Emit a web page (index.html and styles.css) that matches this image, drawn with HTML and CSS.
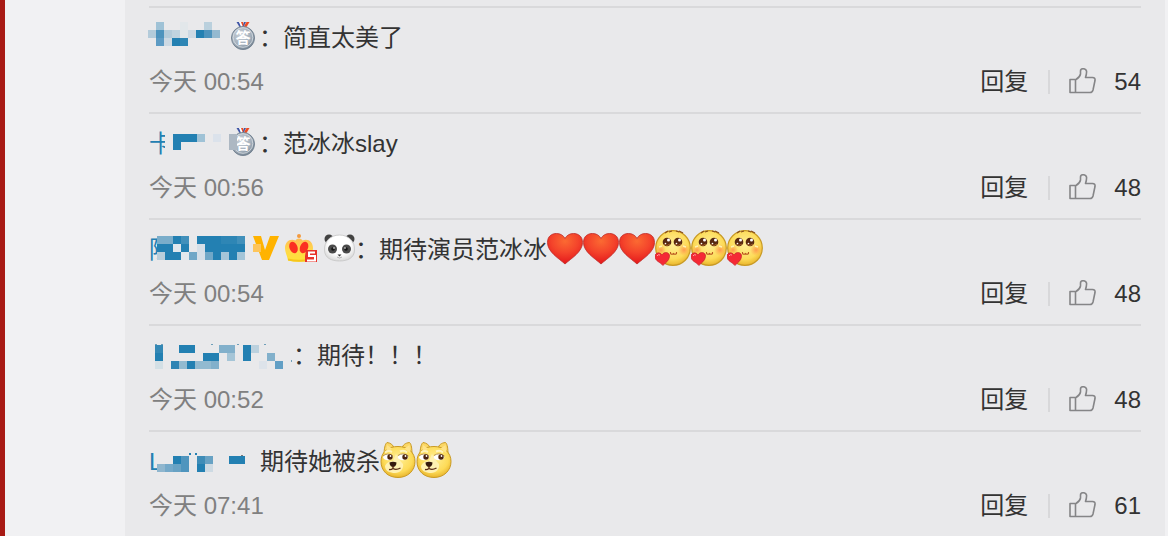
FILE: index.html
```html
<!DOCTYPE html>
<html lang="zh-CN">
<head>
    <meta charset="UTF-8">
    <meta name="viewport" content="width=device-width, initial-scale=1.0">
    <title>评论</title>
    <link rel="stylesheet" href="styles.css">
</head>
<body>
    <!-- ICONS -->
    <svg class="defs" width="0" height="0" aria-hidden="true">
        <defs>
            <radialGradient id="silver" cx="40%" cy="35%" r="70%">
                <stop offset="0" stop-color="#c9d0d8"/>
                <stop offset=".65" stop-color="#a3afbb"/>
                <stop offset="1" stop-color="#71808f"/>
            </radialGradient>
            <radialGradient id="red" cx="50%" cy="25%" r="75%">
                <stop offset="0" stop-color="#fb6a32"/>
                <stop offset=".5" stop-color="#f4442b"/>
                <stop offset="1" stop-color="#e3161b"/>
            </radialGradient>
            <linearGradient id="gold" x1="0" y1="0" x2="0" y2="1">
                <stop offset="0" stop-color="#ffbd55"/>
                <stop offset=".5" stop-color="#ffd84a"/>
                <stop offset="1" stop-color="#ffe234"/>
            </linearGradient>
            <radialGradient id="face" cx="50%" cy="40%" r="60%">
                <stop offset="0" stop-color="#ffef96"/>
                <stop offset=".7" stop-color="#fddb58"/>
                <stop offset="1" stop-color="#e9b52c"/>
            </radialGradient>
            <radialGradient id="blush">
                <stop offset="0" stop-color="#ff8a4a" stop-opacity=".8"/>
                <stop offset="1" stop-color="#ff9a50" stop-opacity="0"/>
            </radialGradient>
            <radialGradient id="fur" cx="50%" cy="40%" r="60%">
                <stop offset=".6" stop-color="#fff"/>
                <stop offset="1" stop-color="#dadada"/>
            </radialGradient>
        </defs>
        <symbol id="medal" viewBox="0 0 24 28">
            <path d="M5.500 0h3l3 5h-3z" fill="#3f55a5"/>
            <path d="M8 0h2l2 5h-2z" fill="#fff"/>
            <path d="M10 0h2l1 3-1 2z" fill="#ee4b22"/>
            <path d="M18.500 0h-3l-3 5h3z" fill="#ee4b22"/>
            <path d="M15 0h-2l-1 4h1z" fill="#3f55a5"/>
            <circle cx="12" cy="16" r="11.500" fill="url(#silver)" stroke="#748392"/>
            <circle cx="12" cy="15.500" r="9.800" fill="none" stroke="#dbe1e6" stroke-width=".8"/>
        </symbol>
        <symbol id="vip" viewBox="0 0 26 24">
            <path d="M0 0h8l4 14L17 0h9L16 24H9z" fill="#ffb300"/>
            <path d="M0 8h8v8H0z" fill="#fdc55b"/>
        </symbol>
        <symbol id="crown" viewBox="0 0 32 28">
            <circle cx="14" cy="2" r="2" fill="#f39a3f"/>
            <path d="M14 4.500c2 0 3 1 3.500 2C23 4 28 8 28 14c0 4-2 7-3 12.500q-11 2.500-22 0C2 21 0 18 0 14 0 8 5 4 10.500 6.500c.5-1 1.500-2 3.500-2z" fill="url(#gold)"/>
            <path d="M3 24.500q11 2.500 22 0v2q-11 2.500-22 0z" fill="#f6c51c"/>
            <ellipse cx="8.500" cy="13.500" rx="4" ry="6" transform="rotate(-22 8.500 13.500)" fill="#fb3022"/>
            <ellipse cx="19" cy="13.500" rx="4" ry="6" transform="rotate(22 19 13.500)" fill="#fb3022"/>
            <path d="M21 16h11v12H20v-6z" fill="#e8332b"/>
            <path d="M30 18.500h-6V22h6v4.500h-8" fill="none" stroke="#fff" stroke-width="2"/>
        </symbol>
        <symbol id="panda" viewBox="0 0 31 28">
            <circle cx="5" cy="5" r="4.500" fill="#424242"/>
            <circle cx="26" cy="5" r="4.500" fill="#424242"/>
            <path d="M15.500 1C25 1 31 8 30.500 16c0 8-7 11-15 11s-15-3-15-11C0 8 6 1 15.500 1z" fill="url(#fur)" stroke="#c5c5c5" stroke-width=".8"/>
            <ellipse cx="8.500" cy="15" rx="4.500" ry="4.500" fill="#4a4a4a"/>
            <ellipse cx="22.500" cy="15" rx="4.500" ry="4.500" fill="#4a4a4a"/>
            <circle cx="9" cy="15" r="1.800" fill="#161616"/>
            <circle cx="22" cy="15" r="1.800" fill="#161616"/>
            <circle cx="10" cy="14" r=".8" fill="#fff"/>
            <circle cx="21" cy="14" r=".8" fill="#fff"/>
            <path d="M13.500 20.500h4l-2 2z" fill="#333"/>
            <path d="M13 23q2.500 2 5 0" fill="none" stroke="#999" stroke-width=".7"/>
        </symbol>
        <symbol id="heart" viewBox="0 0 36 36">
            <path d="M18 34C12 28.500.5 22 .5 12.500.5 6 5 3.500 9.500 3.500c4 0 7 2 8.500 5 1.500-3 4.500-5 8.500-5 4.500 0 9 2.500 9 9C35.500 22 24 28.500 18 34z" fill="url(#red)" stroke="#bc2b27" stroke-width=".8"/>
        </symbol>
        <symbol id="love" viewBox="0 0 36 36">
            <circle cx="18" cy="18" r="17.300" fill="url(#face)" stroke="#c99a24" stroke-width="1.200"/>
            <path d="M10 3l3-2M14 2l3-1M21 1l3 1M24 1l4 2" stroke="#89501d" stroke-width="1.300" fill="none"/>
            <circle cx="6" cy="20" r="5" fill="url(#blush)"/>
            <circle cx="29" cy="20" r="6" fill="url(#blush)"/>
            <path d="M4 17l3-1M28 16l3 1" stroke="#fff2b0" stroke-width="1.500"/>
            <circle cx="12" cy="12" r="4.300" fill="#582911"/>
            <circle cx="23" cy="12" r="4.300" fill="#582911"/>
            <path d="M9 14q3 3 6 0M20 14q3 3 6 0" stroke="#a76128" fill="none"/>
            <circle cx="13.500" cy="10" r="1.500" fill="#fff"/>
            <circle cx="24.500" cy="10" r="1.500" fill="#fff"/>
            <circle cx="10.500" cy="13.500" r=".8" fill="#fff"/>
            <circle cx="21.500" cy="13.500" r=".8" fill="#fff"/>
            <path d="M15.500 22v1.500q1.500 1.500 3 0 1.500 1.500 3 0V22" fill="none" stroke="#bb5b22" stroke-width="1.100"/>
            <path d="M8 35.500C5 32 0 31 0 26.500c0-4 5-5 7-1.500 2-4 8-3 7.500 1.500C14 31 11 32 8 35.500z" fill="#f52935" stroke="#c3252b" stroke-width=".7"/>
            <path d="M2 26q1-2 3-1" fill="none" stroke="#ffa2a0"/>
        </symbol>
        <symbol id="doge" viewBox="0 0 36 36">
            <path d="M4 13C4 7 5 2 7 .5c4 .5 6 2.500 7 5.500h8c1-3 3-5 7.500-5.500C31.500 2 32 7 32 13z" fill="#fbd765" stroke="#c99a24"/>
            <path d="M18 4.500c10 0 17 6 17 15s-7 16-17 16S1 29 1 19.500s7-15 17-15z" fill="url(#face)" stroke="#c99a24"/>
            <path d="M7 3l5 3.500-6 5zM29.500 3l-5 3.500 6 5z" fill="#fee389"/>
            <path d="M5 24c2-4 5-5 8-5l3-7c2 4 4 7 7 10 1 5-3 9-8 9S5 29 5 24z" fill="#fff1b2"/>
            <path d="M5 10.500q3-2.500 7-.5M20 9.500q4-2 7 1" fill="none" stroke="#fff4bd" stroke-width="2"/>
            <ellipse cx="8" cy="15" rx="5" ry="3.300" fill="#fff"/>
            <ellipse cx="23" cy="15" rx="5.300" ry="3.300" fill="#fff"/>
            <path d="M3 14q4-3.500 9.500-.5M18 13.500q5-3.500 10.500.5" fill="none" stroke="#a3762c" stroke-width=".8"/>
            <circle cx="10" cy="15" r="2.700" fill="#4c230e"/>
            <circle cx="25" cy="15" r="2.700" fill="#4c230e"/>
            <circle cx="10.500" cy="14" r=".9" fill="#fff"/>
            <circle cx="25.500" cy="14" r=".9" fill="#fff"/>
            <path d="M9.500 20.500c2-1 5-1 7 0 0 3-2 4.500-3.500 4.500s-3.500-1.500-3.500-4.500z" fill="#351a0e"/>
            <path d="M13 24v3M9 27.500q2 .5 4-1 3 2 7.500-.5" fill="none" stroke="#5b2d16" stroke-width="1.400"/>
        </symbol>
        <symbol id="thumb" viewBox="0 0 28 28">
            <path d="M2 11.500h6c2.500-1.500 4-3 4.500-5.500V3c0-3 5.500-3 6 0 .3 2-.2 4-1 6.500h7c2 0 2.800 1 2.500 3L25 22c-.5 2-1.200 2.500-3 2.500H2zM7.500 11.500v13" fill="none" stroke="#858587" stroke-width="1.600" stroke-linejoin="round"/>
        </symbol>
    </svg>

    <div class="page">
        <ul class="comments">
            <li class="comment">
                <div class="content">
                    <a href="#" class="name" aria-label="用户">
                        <svg class="mosaic" width="82" height="36">
                            <path d="M7 4h8v8H7z" fill="#9fc2d6"/>
                            <path d="M31 4h8v16h-8z" fill="#e2e7ea"/>
                            <path d="M55 4h8v8h-8z" fill="#bad0dd"/>
                            <path d="M-1 12h8v8h-8zM15 12h8v8h-8z" fill="#b3cbda"/>
                            <path d="M7 12h8v8H7zM55 12h8v8h-8z" fill="#4d93bd"/>
                            <path d="M23 12h8v8h-8z" fill="#c0d3df"/>
                            <path d="M39 12h8v8h-8zM15 20h8v8h-8z" fill="#cdd9e3"/>
                            <path d="M47 12h8v8h-8zM23 20h8v8h-8z" fill="#2380b2"/>
                            <path d="M63 12h8v8h-8z" fill="#94b9d0"/>
                            <path d="M7 20h8v8H7z" fill="#5d9bc4"/>
                            <path d="M31 20h8v8h-8z" fill="#2e86b5"/>
                        </svg>
                    </a>
                    <span class="medal"><svg><use href="#medal"/></svg><b>答</b></span>
                    <span class="text">：简直太美了</span>
                </div>
                <div class="meta">
                    <time>今天 00:54</time>
                    <div class="actions">
                        <button type="button" class="reply">回复</button>
                        <button type="button" class="like"><svg class="thumb"><use href="#thumb"/></svg>54</button>
                    </div>
                </div>
            </li>

            <li class="comment">
                <div class="content">
                    <a href="#" class="name"><span class="initial wide">卡</span>
                        <svg class="mosaic" width="66" height="36">
                            <path d="M0 0h10v36H0z" fill="#e9e9eb"/>
                            <path d="M8 10h24v8H16v8H8z" fill="#2380b2"/>
                            <path d="M32 10h8v8h-8z" fill="#9fc2d6"/>
                            <path d="M48 10h8v8h-8z" fill="#dbe2eb"/>
                            <path d="M64 10h8v16h-8z" fill="#adb8c3"/>
                        </svg>
                    </a>
                    <span class="medal"><svg><use href="#medal"/></svg><b>答</b></span>
                    <span class="text">：范冰冰slay</span>
                </div>
                <div class="meta">
                    <time>今天 00:56</time>
                    <div class="actions">
                        <button type="button" class="reply">回复</button>
                        <button type="button" class="like"><svg class="thumb"><use href="#thumb"/></svg>48</button>
                    </div>
                </div>
            </li>

            <li class="comment">
                <div class="content">
                    <a href="#" class="name"><span class="initial">陈</span>
                        <svg class="mosaic" width="88" height="36">
                            <path d="M0 0h20v36H0z" fill="#e9e9eb"/>
                            <path d="M0 6h32v24H0zM40 6h48v24H48V14h-8z" fill="#2380b2"/>
                            <path d="M0 6h16v8H0z" fill="#7aadca"/>
                            <path d="M24 6h8v8h-8zM80 6h8v8h-8z" fill="#4190bb"/>
                            <path d="M64 6h16v8H64z" fill="#2e86b5"/>
                            <path d="M16 14h8v8h-8zM24 22h8v8h-8z" fill="#e0e7ed"/>
                            <path d="M40 14h8v16h-8z" fill="#d5dfe8"/>
                            <path d="M0 22h8v8H0z" fill="#b9cedb"/>
                            <path d="M32 22h8v8h-8zM48 22h8v8h-8z" fill="#70a7c7"/>
                            <path d="M64 22h8v8h-8zM80 22h8v8h-8z" fill="#a4c5d8"/>
                        </svg>
                    </a>
                    <svg class="icon vip"><use href="#vip"/></svg>
                    <svg class="icon crown"><use href="#crown"/></svg>
                    <svg class="icon panda"><use href="#panda"/></svg>
                    <span class="text">：期待演员范冰冰</span>
                    <svg class="emoji"><use href="#heart"/></svg>
                    <svg class="emoji"><use href="#heart"/></svg>
                    <svg class="emoji"><use href="#heart"/></svg>
                    <svg class="emoji"><use href="#love"/></svg>
                    <svg class="emoji"><use href="#love"/></svg>
                    <svg class="emoji"><use href="#love"/></svg>
                </div>
                <div class="meta">
                    <time>今天 00:54</time>
                    <div class="actions">
                        <button type="button" class="reply">回复</button>
                        <button type="button" class="like"><svg class="thumb"><use href="#thumb"/></svg>48</button>
                    </div>
                </div>
            </li>

            <li class="comment">
                <div class="content">
                    <a href="#" class="name" aria-label="用户">
                        <svg class="mosaic" width="144" height="36">
                            <path d="M6 9h8v8H6z" fill="#3488b5"/>
                            <path d="M6 17h8v8H6zM30 9h16v8H30zM54 17h16v8H54zM94 9h8v16h-8zM38 25h8v8h-8z" fill="#2380b2"/>
                            <path d="M70 9h16v8H70zM118 17h8v8h-8zM62 25h8v8h-8z" fill="#82b0cb"/>
                            <path d="M102 9h8v8h-8z" fill="#bcd1de"/>
                            <path d="M78 17h8v8h-8z" fill="#a5c5d7"/>
                            <path d="M6 25h8v8H6z" fill="#d3dfe5"/>
                            <path d="M22 25h8v8h-8z" fill="#2e84b3"/>
                            <path d="M30 25h8v8h-8zM46 25h16v8H46z" fill="#92bad0"/>
                            <path d="M110 25h8v8h-8z" fill="#dde3ea"/>
                            <path d="M126 25h8v8h-8z" fill="#629fc5"/>
                            <path d="M6 8h2v1H6zM12 8h2v1h-2zM62 8h2v1h-2zM88 8h2v1h-2zM115 8h2v1h-2zM142 24h1v2h-1z" fill="#6f9fb9"/>
                        </svg>
                    </a>
                    <span class="text">：期待！！！</span>
                </div>
                <div class="meta">
                    <time>今天 00:52</time>
                    <div class="actions">
                        <button type="button" class="reply">回复</button>
                        <button type="button" class="like"><svg class="thumb"><use href="#thumb"/></svg>48</button>
                    </div>
                </div>
            </li>

            <li class="comment">
                <div class="content">
                    <a href="#" class="name"><span class="initial">L</span>
                        <svg class="mosaic" width="103" height="36">
                            <path d="M0 0h10v36H0z" fill="#e9e9eb"/>
                            <path d="M16 14h8v8h-8zM72 14h16v8H72zM40 22h8v8h-8zM32 11h2v2h-2zM38 11h2v2h-2z" fill="#2380b2"/>
                            <path d="M24 14h8v16h-8z" fill="#4f95be"/>
                            <path d="M40 14h8v8h-8z" fill="#3e8cb7"/>
                            <path d="M48 14h8v8h-8zM16 22h8v8h-8z" fill="#68a2c4"/>
                            <path d="M0 22h8v8H0z" fill="#8fb6ce"/>
                            <path d="M8 22h8v8H8z" fill="#75a9c9"/>
                            <path d="M48 22h8v8h-8z" fill="#cddae3"/>
                            <path d="M84 13h2v1h-2z" fill="#77787b"/>
                        </svg>
                    </a>
                    <span class="text">期待她被杀</span>
                    <svg class="emoji"><use href="#doge"/></svg>
                    <svg class="emoji"><use href="#doge"/></svg>
                </div>
                <div class="meta">
                    <time>今天 07:41</time>
                    <div class="actions">
                        <button type="button" class="reply">回复</button>
                        <button type="button" class="like"><svg class="thumb"><use href="#thumb"/></svg>61</button>
                    </div>
                </div>
            </li>
        </ul>
    </div>
</body>
</html>
```
FILE: styles.css
```css
* {
    box-sizing: border-box;
}
body {
    margin: 0;
    background: #f1f1f3;
    color: #333;
    font-family: "Liberation Sans", "Noto Sans CJK SC", sans-serif;
    font-size: 24px;
}
.defs {
    position: absolute;
}
.page {
    min-height: 100vh;
    border-left: 5px solid #a81a14;
    padding: 0 3px 0 120px;
    display: flex;
}
.comments {
    flex: 1;
    margin: 0;
    padding: 6px 24px 0;
    list-style: none;
    background: #e9e9eb;
}
.comment {
    border-top: 2px solid #d9d9db;
    padding: 10px 0 16px;
}
.content {
    display: flex;
    align-items: center;
    height: 36px;
    line-height: 36px;
    white-space: nowrap;
}
.text {
    padding-top: 4px;
}
.name {
    display: flex;
    height: 36px;
    color: #2380b2;
    text-decoration: none;
}
.initial {
    width: 8px;
    line-height: 40px;
}
.initial.wide {
    width: 16px;
}
/* blurred part of the name, may run over the badge next to it */
.mosaic {
    position: relative;
    z-index: 1;
    flex-shrink: 0;
    overflow: visible;
    shape-rendering: crispEdges;
}
.icon {
    height: 28px;
    flex-shrink: 0;
}
.medal {
    display: grid;
    width: 24px;
    height: 28px;
    margin-right: 4px;
}
.medal svg,
.medal b {
    grid-area: 1 / 1;
    width: 24px;
    height: 28px;
}
.medal b {
    color: #fff;
    font-size: 15px;
    line-height: 32px;
    text-align: center;
}
.vip {
    width: 26px;
    height: 24px;
    margin: 0 6px 0 8px;
}
.crown {
    width: 32px;
    margin-right: 7px;
}
.panda {
    width: 31px;
}
.emoji {
    width: 36px;
    height: 36px;
    flex-shrink: 0;
}
.meta {
    display: flex;
    justify-content: space-between;
    margin-top: 14px;
    line-height: 28px;
    color: #808080;
}
.actions {
    display: flex;
    align-items: center;
}
button {
    padding: 0;
    border: none;
    background: none;
    color: #333;
    font: inherit;
    line-height: 28px;
    cursor: pointer;
}
.like {
    display: flex;
    align-items: center;
    gap: 18px;
}
.like::before {
    content: "";
    width: 2px;
    height: 24px;
    margin-left: 20px;
    background: #d8d8da;
}
.thumb {
    width: 28px;
    height: 28px;
}
```
